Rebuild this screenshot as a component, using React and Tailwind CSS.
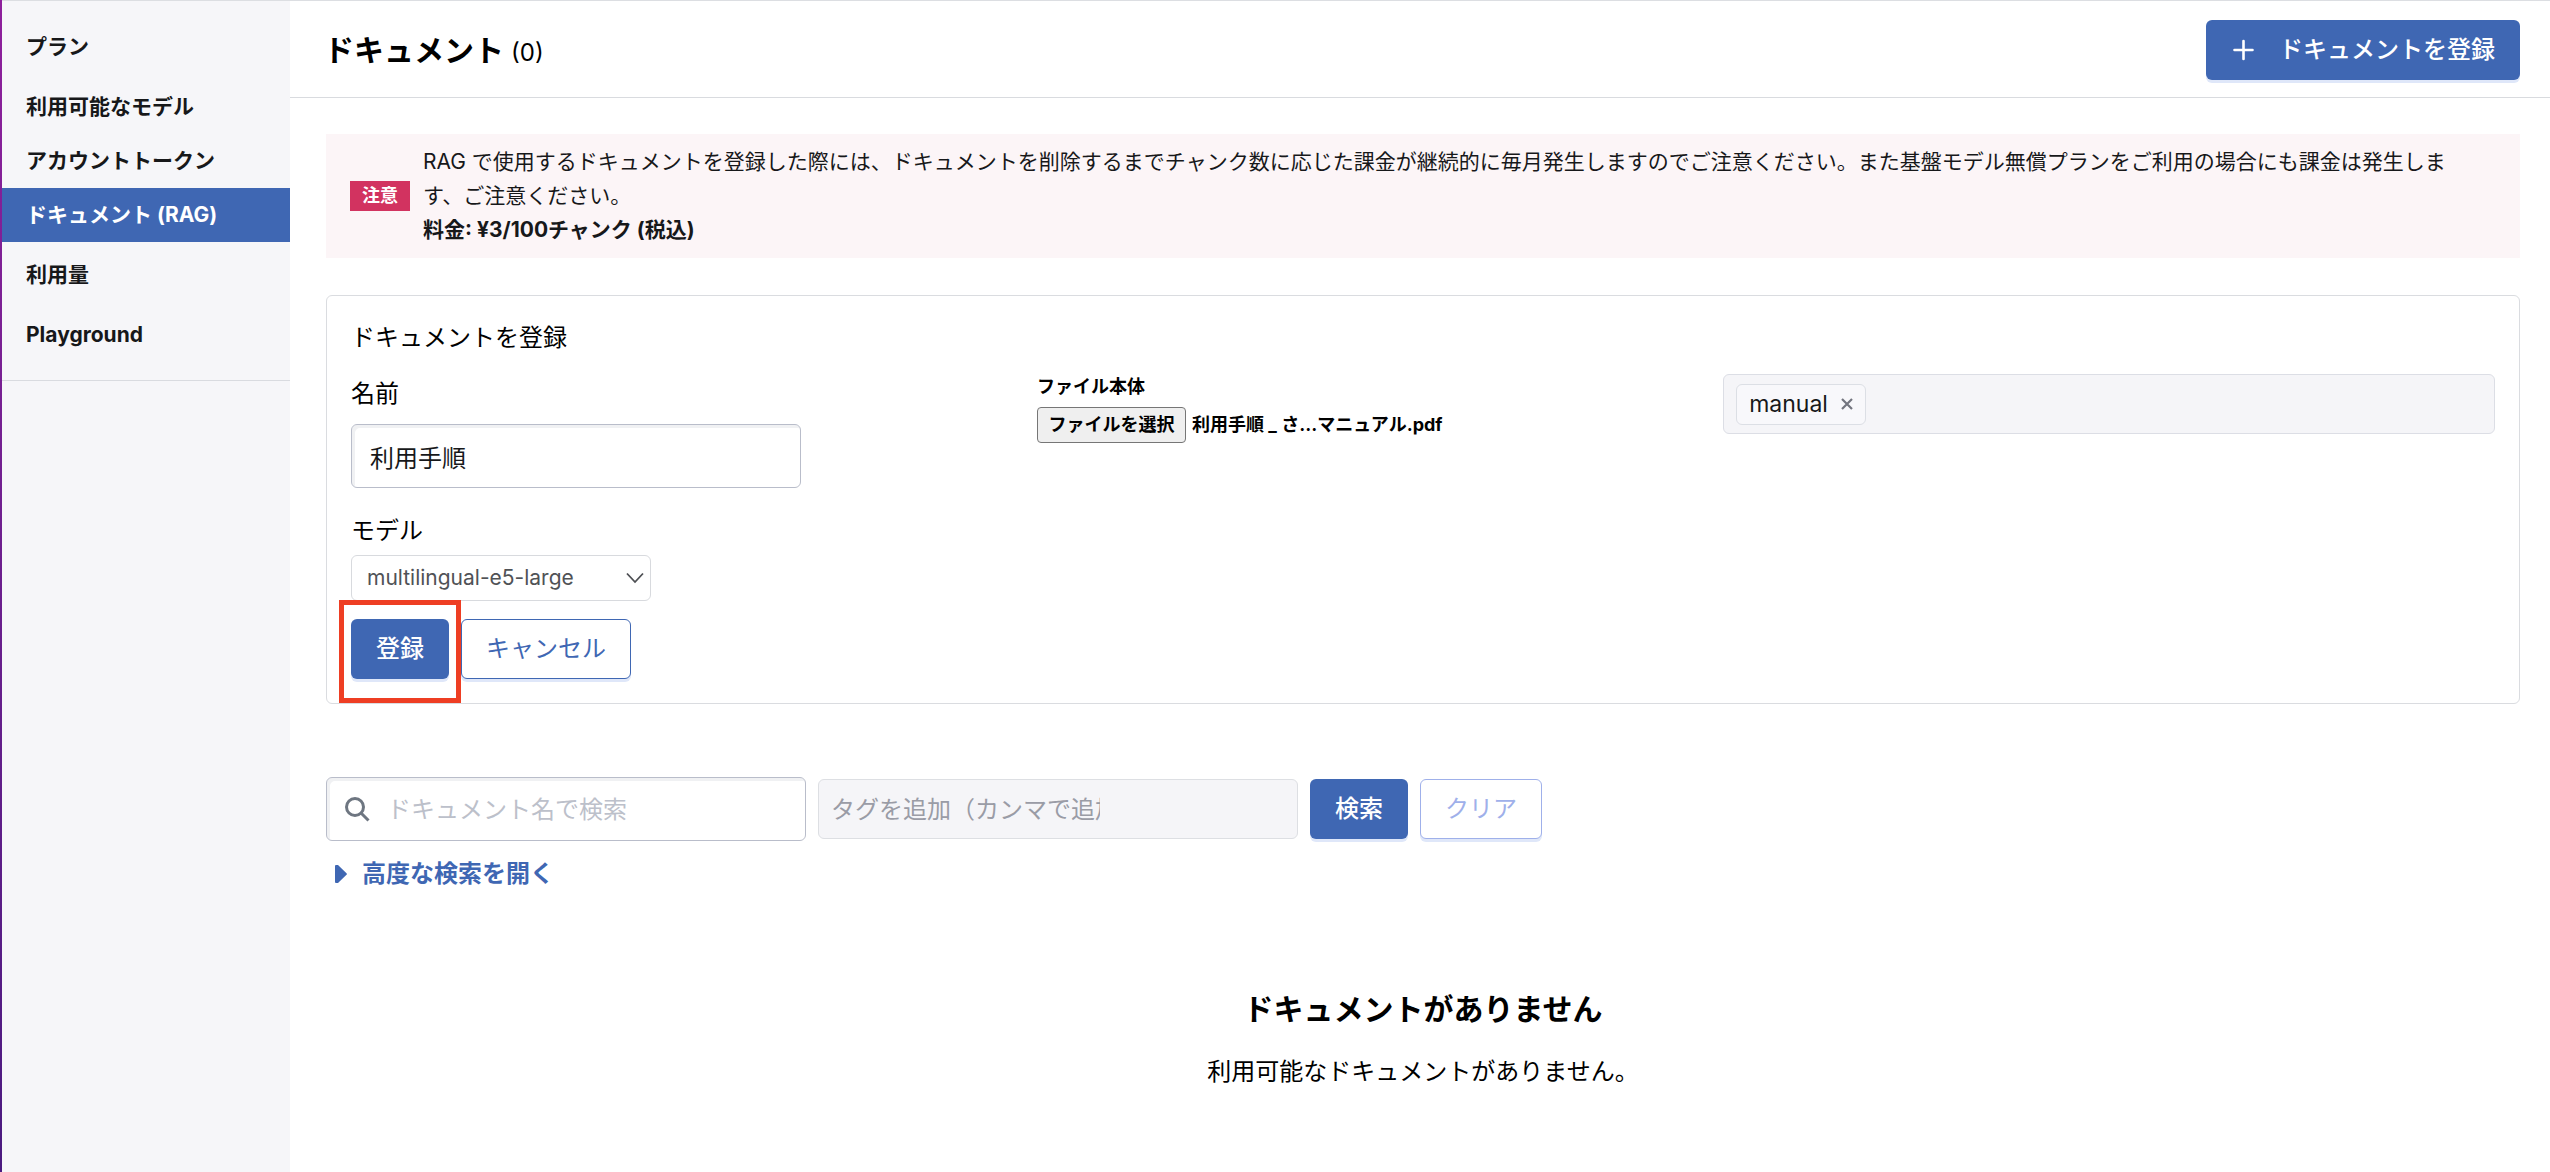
import React from "react";

const NAV_ITEMS = [
  { label: "プラン", spaced: true },
  { label: "利用可能なモデル" },
  { label: "アカウントトークン" },
  { label: "ドキュメント (RAG)", active: true, spaced: true },
  { label: "利用量", spaced: true },
  { label: "Playground" },
];

function Sidebar() {
  return (
    <aside className="flex w-[290px] shrink-0 bg-[#f6f6f9]">
      <div className="w-0.5 shrink-0 bg-linear-to-b from-[#8e1f9c] to-[#4b1a80]" />
      <div className="flex-1 border-t border-[#dcdee2]">
        <nav className="border-b border-[#d9dbe0] pt-[19px] pb-[18px] text-[21px] font-bold text-[#17181a]">
          <ul>
            {NAV_ITEMS.map((item) => (
              <li key={item.label} className={item.spaced ? "mb-1.5" : ""}>
                <a
                  href="#"
                  aria-current={item.active ? "page" : undefined}
                  className={
                    item.active
                      ? "flex h-[54px] items-center bg-[#3f67b3] px-6 text-white"
                      : "flex h-[54px] items-center px-6"
                  }
                >
                  {item.label}
                </a>
              </li>
            ))}
          </ul>
        </nav>
      </div>
    </aside>
  );
}

function PrimaryButton({ children }) {
  return (
    <button
      type="button"
      className="flex h-[60px] items-center rounded-md bg-[#3f67b3] px-[25px] text-2xl font-medium text-white shadow-[0_3px_0_#dfe7f9]"
    >
      {children}
    </button>
  );
}

function OutlineButton({ children, muted }) {
  return (
    <button
      type="button"
      className={
        muted
          ? "h-[60px] rounded-md border border-[#9fb0ea] bg-white px-6 text-2xl text-[#9fb0ea] shadow-[0_3px_0_#dfe7f9]"
          : "h-[60px] rounded-md border border-[#3f67b3] bg-white px-6 text-2xl text-[#3f67b3] shadow-[0_3px_0_#dfe7f9]"
      }
    >
      {children}
    </button>
  );
}

function Header() {
  return (
    <header className="flex h-[97px] items-center justify-between border-b border-[#d9dbdf] pt-0.5 pr-[30px] pl-[34px]">
      <h1 className="text-[30px] font-bold">
        ドキュメント <span className="text-2xl font-normal">(0)</span>
      </h1>
      <PrimaryButton>
        <svg viewBox="0 0 24 24" className="mr-6 h-6 w-6" fill="none" stroke="currentColor" strokeWidth="2.6" strokeLinecap="round" aria-hidden="true">
          <path d="M12.500 3v18M3.500 12h18" />
        </svg>
        ドキュメントを登録
      </PrimaryButton>
    </header>
  );
}

function Notice() {
  return (
    <section className="mt-9 flex items-center bg-[#fcf5f7] py-[11px] pr-12 pl-6 text-[#17181a]">
      <strong className="mr-[13px] flex h-[30px] w-[60px] shrink-0 items-center justify-center bg-[#d23360] text-lg font-bold text-white">
        注意
      </strong>
      <p className="text-[21px] leading-[34px]">
        RAG で使用するドキュメントを登録した際には、ドキュメントを削除するまでチャンク数に応じた課金が継続的に毎月発生しますのでご注意ください。また基盤モデル無償プランをご利用の場合にも課金は発生します、ご注意ください。
        <br />
        <strong>料金: ¥3/100チャンク (税込)</strong>
      </p>
    </section>
  );
}

function RegisterForm() {
  return (
    <form className="mt-[37px] rounded-md border border-[#dadce0] px-6 pt-6 pb-6" onSubmit={(e) => e.preventDefault()}>
      <h2 className="text-2xl leading-9">ドキュメントを登録</h2>
      <div className="mt-[18px] grid grid-cols-[32fr_32fr_36fr]">
        <div>
          <label htmlFor="doc-name" className="block pt-0.5 text-2xl leading-9">
            名前
          </label>
          <input
            id="doc-name"
            type="text"
            defaultValue="利用手順"
            className="mt-3 block h-16 w-[450px] rounded-md border border-[#b9bdca] bg-white px-[18px] text-2xl text-[#17181a] shadow-[inset_3px_3px_0_#f0f1f3]"
          />
          <label htmlFor="doc-model" className="mt-6 block pt-px text-2xl leading-9">
            モデル
          </label>
          <div className="relative mt-1.5 w-[300px]">
            <select
              id="doc-model"
              className="block h-[46px] w-full appearance-none rounded-md border border-[#d8dade] bg-white pr-10 pl-[15px] text-[21px] text-[#505256]"
            >
              <option>multilingual-e5-large</option>
            </select>
            <svg viewBox="0 0 18 12" className="pointer-events-none absolute top-[17px] right-[7px] h-3 w-[18px]" fill="none" stroke="#4d4f53" strokeWidth="1.8" aria-hidden="true">
              <path d="M1 1.5l8 8.500 8-8.500" />
            </svg>
          </div>
        </div>

        <div className="pt-px text-lg leading-6 font-bold">
          <label htmlFor="doc-file" className="block">
            ファイル本体
          </label>
          <div className="mt-2 flex items-center">
            <input id="doc-file" type="file" className="sr-only" />
            <button type="button" className="flex h-9 w-[149px] items-center justify-center rounded border border-[#767676] bg-[#efefef]">
              ファイルを選択
            </button>
            <span className="ml-1.5">利用手順 _ さ...マニュアル.pdf</span>
          </div>
        </div>

        <div className="flex h-[60px] items-center rounded-md border border-[#dcdee5] bg-[#f5f5f8] px-3">
          <span className="flex h-[41px] items-center rounded-md border border-[#dcdfe5] bg-[#f8f8fb] px-3 text-[23px] text-[#17181a]">
            manual
            <button type="button" aria-label="manual を削除" className="ml-[13px]">
              <svg viewBox="0 0 12 12" className="h-3 w-3" fill="none" stroke="#73757f" strokeWidth="2.2" aria-hidden="true">
                <path d="M1 1l10 10M11 1L1 11" />
              </svg>
            </button>
          </span>
          <input type="text" aria-label="タグ" className="min-w-0 flex-1 bg-transparent px-2" />
        </div>
      </div>

      <div className="mt-[18px] flex gap-3">
        <div className="relative">
          <PrimaryButton>登録</PrimaryButton>
          <div className="pointer-events-none absolute -inset-x-3 -top-[19px] -bottom-6 z-10 border-[5px] border-[#ee3e23]" />
        </div>
        <OutlineButton>キャンセル</OutlineButton>
      </div>
    </form>
  );
}

function SearchBar() {
  return (
    <section className="mt-[73px]">
      <form className="flex items-center gap-3" onSubmit={(e) => e.preventDefault()}>
        <div className="relative w-[480px]">
          <svg viewBox="0 0 26 26" className="absolute top-[19px] left-[18px] h-[26px] w-[26px]" fill="none" stroke="#6e7681" strokeWidth="3" aria-hidden="true">
            <circle cx="11" cy="11" r="8.500" />
            <path d="M17 17l7.500 7.500" />
          </svg>
          <input
            type="search"
            aria-label="ドキュメント名で検索"
            placeholder="ドキュメント名で検索"
            className="block h-16 w-full rounded-md border border-[#b9bdca] pr-4 pl-[60px] text-2xl shadow-[inset_3px_3px_0_#f0f1f3] placeholder:text-[#bcc0ca]"
          />
        </div>
        <div className="flex h-[60px] w-[480px] items-center rounded-md border border-[#dddfe3] bg-[#f5f5f8] px-3">
          <input
            type="text"
            aria-label="タグを追加"
            placeholder="タグを追加（カンマで追加）"
            className="h-9 w-[269px] bg-transparent text-2xl placeholder:text-[#9a9ca6]"
          />
        </div>
        <PrimaryButton>検索</PrimaryButton>
        <OutlineButton muted>クリア</OutlineButton>
      </form>
      <button type="button" className="mt-[15px] flex h-9 items-center pl-[9px] text-2xl font-bold text-[#3f67b3]">
        <svg viewBox="0 0 12 18" className="mr-[15px] h-[18px] w-3" fill="currentColor" aria-hidden="true">
          <path d="M1 0h2l8.500 8.200a1.100 1.100 0 0 1 0 1.600L3 18H1a1 1 0 0 1-1-1V1a1 1 0 0 1 1-1z" />
        </svg>
        高度な検索を開く
      </button>
    </section>
  );
}

function EmptyState() {
  return (
    <section className="mt-24 pb-16 text-center">
      <h2 className="text-[30px] leading-[42px] font-bold">ドキュメントがありません</h2>
      <p className="mt-6 text-2xl leading-9">利用可能なドキュメントがありません。</p>
    </section>
  );
}

export default function App() {
  return (
    <div
      lang="ja"
      className="flex min-h-screen bg-white font-['Inter','Noto_Sans_CJK_JP',sans-serif] text-black"
    >
      <Sidebar />
      <main className="min-w-0 flex-1 border-t border-[#dcdee2]">
        <Header />
        <div className="pr-[30px] pl-9">
          <Notice />
          <RegisterForm />
          <SearchBar />
          <EmptyState />
        </div>
      </main>
    </div>
  );
}
